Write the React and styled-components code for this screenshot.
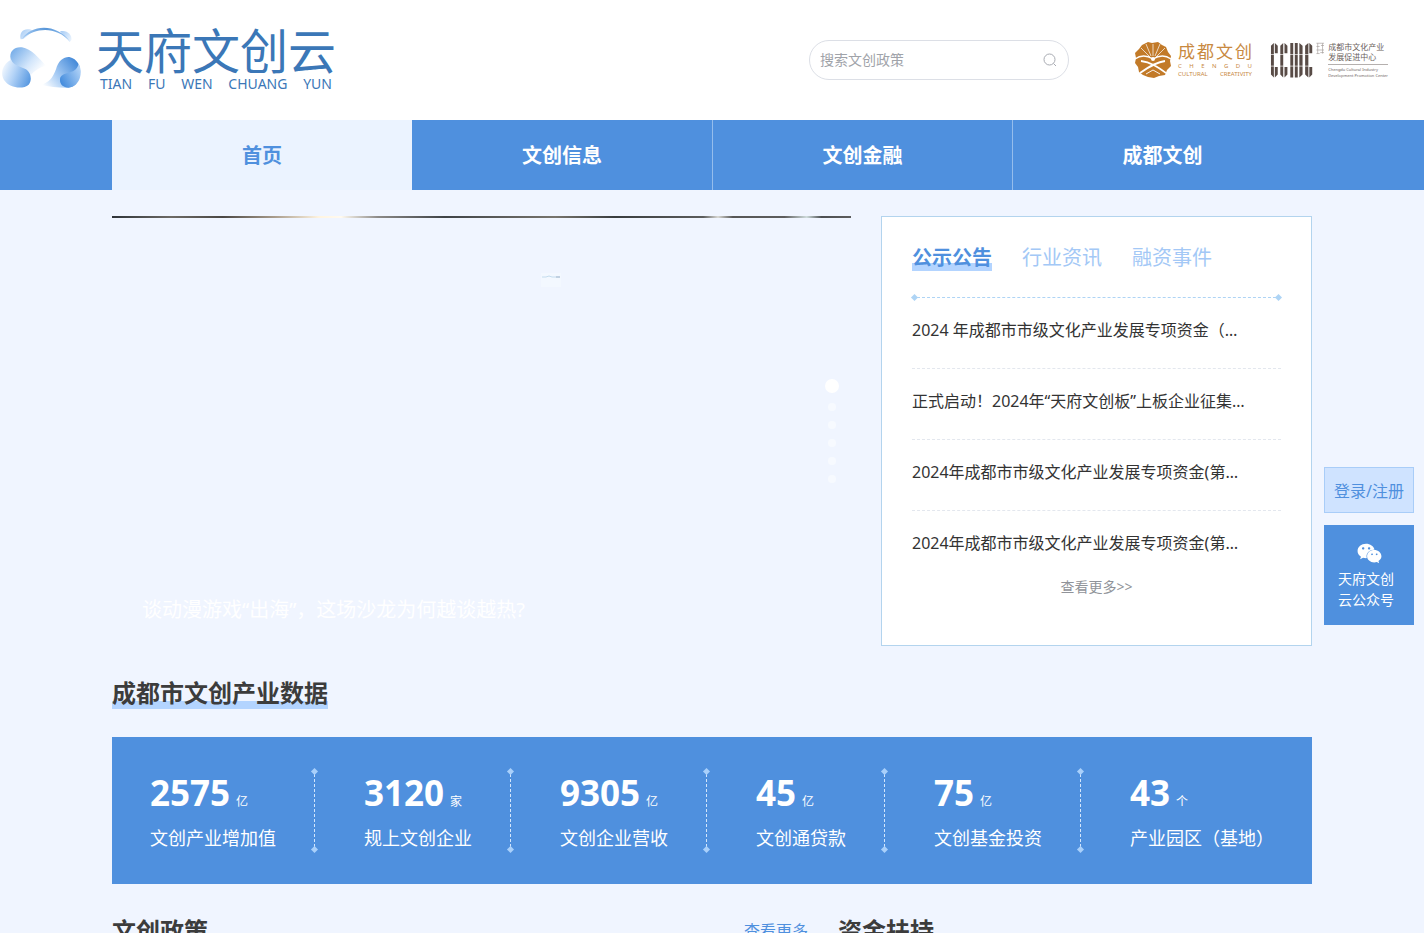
import React, { useState } from "react";
import styled, { createGlobalStyle, css } from "styled-components";
import { FaWeixin } from "react-icons/fa";

const GlobalStyle = createGlobalStyle`
  * {
    box-sizing: border-box;
  }
  body {
    margin: 0;
    background: #f0f5ff;
    color: #333;
    font-family: "Noto Sans", "Noto Sans CJK SC", sans-serif;
    font-size: 16px;
  }
  a {
    color: inherit;
    text-decoration: none;
  }
  button {
    padding: 0;
    border: 0;
    background: none;
    font: inherit;
    cursor: pointer;
  }
  ul {
    margin: 0;
    padding: 0;
    list-style: none;
  }
`;

const Container = styled.div`
  width: 100%;
  max-width: 1200px;
  margin: 0 auto;
`;

/* header */

const Header = styled.header`
  display: flex;
  align-items: center;
  height: 120px;
  padding-right: 36px;
  background: #fff;
`;

const Brand = styled.a`
  display: flex;
  align-items: center;
  gap: 6px;
  margin-right: auto;
`;

const BrandMark = styled.svg`
  width: 90px;
  height: 72px;
`;

const BrandText = styled.div`
  display: flex;
  flex-direction: column;
  width: 240px;
  padding-bottom: 4px;
  color: #3b77b7;
`;

const BrandName = styled.span`
  font-size: 48px;
  line-height: 52px;
`;

const BrandPinyin = styled.span`
  display: flex;
  justify-content: space-between;
  padding: 0 4px;
  font-size: 14px;
  line-height: 14px;
`;

const Search = styled.form`
  display: flex;
  align-items: center;
  width: 260px;
  height: 40px;
  margin-right: 65px;
  padding: 0 10px;
  border: 1px solid #dcdfe6;
  border-radius: 20px;
`;

const SearchInput = styled.input`
  flex: 1;
  min-width: 0;
  padding: 0;
  border: 0;
  outline: 0;
  background: none;
  font: inherit;
  font-size: 14px;
  line-height: 20px;
  &::placeholder {
    color: #a0a3a9;
    opacity: 1;
  }
`;

const SearchButton = styled.button`
  display: flex;
  color: #a8abb2;
`;

const Partners = styled.div`
  display: flex;
  align-items: center;
  gap: 18px;
`;

const Partner = styled.a`
  display: flex;
  align-items: center;
  gap: ${props => props.$gap}px;
  width: 118px;
  color: ${props => props.$color};
`;

const PartnerText = styled.span`
  display: flex;
  flex-direction: column;
  flex: 1;
  white-space: nowrap;
`;

const Spread = styled.span`
  display: flex;
  justify-content: space-between;
  font-size: ${props => props.$size}px;
  line-height: ${props => props.$line}px;
`;

const PartnerLine = styled.span`
  font-size: ${props => props.$size}px;
  line-height: ${props => props.$line}px;
`;

const PartnerRule = styled.span`
  height: 1px;
  margin: 2px 0;
  background: #b5b0ae;
`;

/* navigation */

const Nav = styled.nav`
  background: #4f90de;
`;

const NavList = styled(Container)`
  display: grid;
  grid-template-columns: repeat(4, 1fr);
`;

const NavItem = styled.a`
  padding-top: 1px;
  border-left: 1px solid #95bdec;
  color: #fff;
  font-size: 20px;
  font-weight: 700;
  line-height: 69px;
  text-align: center;
  &:nth-child(-n + 2) {
    border-left: 0;
  }
  ${props =>
    props.$active &&
    css`
      background: #ebf3ff;
      color: #4f90de;
    `}
`;

/* banner and notices */

const Top = styled(Container)`
  display: grid;
  grid-template-columns: minmax(0, 739fr) minmax(0, 431fr);
  gap: 30px;
  padding-top: 26px;
`;

const Banner = styled.section`
  position: relative;
  display: flex;
  align-items: flex-end;
`;

const BannerStrip = styled.div`
  position: absolute;
  top: 0;
  left: 0;
  right: 0;
  height: 2px;
  background: linear-gradient(
    90deg,
    #2e3338 0%,
    #6d6a66 8%,
    #4a4744 15%,
    #a99c8c 22%,
    #fff4e0 28%,
    #fffaf0 31%,
    #8c8a88 36%,
    #3f4347 45%,
    #77746d 60%,
    #393d3f 68%,
    #5b5c5c 80%,
    #d9d9d5 82%,
    #565656 84%,
    #5d5d5d 91%,
    #cfdcdc 94%,
    #4c4f52 96%,
    #5d5d5d 100%
  );
`;

const BannerSpeck = styled.svg`
  position: absolute;
  top: 56px;
  left: 58%;
  width: 20px;
  height: 16px;
`;

const BannerCaption = styled.a`
  padding: 0 30px 22px;
  color: #fff;
  font-size: 20px;
  line-height: 28px;
`;

const Dots = styled.div`
  position: absolute;
  top: 163px;
  right: 12px;
  display: flex;
  flex-direction: column;
  align-items: center;
  gap: 10px;
`;

const Dot = styled.button`
  width: ${props => (props.$active ? 14 : 8)}px;
  height: ${props => (props.$active ? 14 : 8)}px;
  border-radius: 50%;
  background: ${props => (props.$active ? "#fff" : "#f7faff")};
`;

const Notices = styled.section`
  display: flex;
  flex-direction: column;
  height: 430px;
  padding: 28px 30px 0;
  border: 1px solid #b3d4ee;
  background: #fff;
`;

const Tabs = styled.div`
  display: flex;
  gap: 30px;
`;

const Tab = styled.button`
  color: #a3c8f6;
  font-size: 20px;
  line-height: 26px;
  ${props =>
    props.$active &&
    css`
      background: linear-gradient(#b3d4ff, #b3d4ff) bottom / 100% 8px no-repeat;
      color: #4f90de;
      font-weight: 700;
    `}
`;

const Divider = styled.div`
  display: flex;
  align-items: center;
  height: 7px;
  margin-top: 23px;
  color: #aed4f5;
  &::before,
  &::after {
    content: "";
    width: 5px;
    height: 5px;
    background: currentColor;
    transform: rotate(45deg);
  }
`;

const DividerLine = styled.span`
  flex: 1;
  border-top: 1px dashed currentColor;
`;

const NoticeItem = styled.li`
  height: 71px;
  padding-top: 20px;
  border-bottom: 1px dashed #e3e7ee;
  line-height: 24px;
  &:first-child {
    height: 68px;
    padding-top: 17px;
  }
  &:last-child {
    height: 66px;
    border-bottom: 0;
  }
`;

const NoticeLink = styled.a`
  display: block;
  overflow: hidden;
  white-space: nowrap;
`;

const NoticeMore = styled.a`
  align-self: center;
  color: #909399;
  font-size: 14px;
  line-height: 20px;
`;

/* industry figures */

const SectionTitle = styled.h2`
  margin: 0;
  color: #3c3c3c;
  font-size: 24px;
  font-weight: 700;
  line-height: 32px;
`;

const Marked = styled.span`
  display: inline-block;
  background: linear-gradient(#b3d4ff, #b3d4ff) bottom / 100% 8px no-repeat;
`;

const Figures = styled(Container)`
  padding-top: 31px;
`;

const FigurePanel = styled.div`
  display: flex;
  justify-content: space-between;
  margin-top: 28px;
  padding: 30px 38px;
  background: #4f90de;
  color: #fff;
`;

const Figure = styled.div`
  white-space: nowrap;
`;

const FigureValue = styled.div`
  display: flex;
  align-items: baseline;
  gap: 6px;
  height: 50px;
  font-size: 35px;
  font-weight: 700;
  line-height: 52px;
`;

const FigureUnit = styled.span`
  font-size: 12px;
  font-weight: 400;
  line-height: 16px;
`;

const FigureLabel = styled.div`
  padding-top: 8px;
  font-size: 18px;
  line-height: 26px;
`;

const FigureDivider = styled.div`
  display: flex;
  flex-direction: column;
  align-items: center;
  width: 12px;
  height: 87px;
  margin: 0 44px 0 32px;
  padding: 2px 0;
  &::before,
  &::after {
    content: "";
    width: 5px;
    height: 5px;
    background: #a9d0fb;
    transform: rotate(45deg);
  }
`;

const FigureLine = styled.span`
  flex: 1;
  border-left: 1px dashed #d3e6fc;
`;

/* policy and funding */

const Bottom = styled(Container)`
  display: grid;
  grid-template-columns: minmax(0, 696fr) minmax(0, 474fr);
  gap: 30px;
  padding: 31px 0 40px;
`;

const SectionHead = styled.div`
  display: flex;
  align-items: center;
  justify-content: space-between;
`;

const MoreLink = styled.a`
  color: #4f90de;
  font-size: 16px;
  line-height: 24px;
`;

/* floating buttons */

const Side = styled.aside`
  position: fixed;
  top: 467px;
  right: 10px;
  display: flex;
  flex-direction: column;
  gap: 12px;
  width: 90px;
`;

const LoginButton = styled.button`
  height: 46px;
  border: 1px solid #a9cdf8;
  background: #cfe3ff;
  color: #4f90de;
  font-size: 16px;
`;

const WechatButton = styled.button`
  display: flex;
  flex-direction: column;
  align-items: center;
  justify-content: center;
  gap: 2px;
  height: 100px;
  padding: 0 14px;
  background: #4f90de;
  color: #fff;
  font-size: 14px;
  line-height: 21px;
  text-align: left;
`;

const navItems = ["首页", "文创信息", "文创金融", "成都文创"];

const tabs = ["公示公告", "行业资讯", "融资事件"];

const notices = [
  "2024 年成都市市级文化产业发展专项资金（…",
  "正式启动！2024年“天府文创板”上板企业征集…",
  "2024年成都市市级文化产业发展专项资金(第…",
  "2024年成都市市级文化产业发展专项资金(第…"
];

const figures = [
  { value: 2575, unit: "亿", label: "文创产业增加值" },
  { value: 3120, unit: "家", label: "规上文创企业" },
  { value: 9305, unit: "亿", label: "文创企业营收" },
  { value: 45, unit: "亿", label: "文创通贷款" },
  { value: 75, unit: "亿", label: "文创基金投资" },
  { value: 43, unit: "个", label: "产业园区（基地）" }
];

const PandaLogo = () => (
  <BrandMark viewBox="0 6 270 216" aria-hidden="true">
    <defs>
      <linearGradient id="ear" x1="0" y1="0.2" x2="0.9" y2="0.8">
        <stop offset="0" stopColor="#a9cdf5" />
        <stop offset="1" stopColor="#e6f1fd" />
      </linearGradient>
      <linearGradient id="arc" x1="0" y1="0" x2="1" y2="0">
        <stop offset="0" stopColor="#a4cbf4" />
        <stop offset="0.5" stopColor="#5896d8" />
        <stop offset="1" stopColor="#9ac5f2" />
      </linearGradient>
      <linearGradient id="tail" x1="0" y1="0.2" x2="0.9" y2="0.8">
        <stop offset="0" stopColor="#79afe9" />
        <stop offset="0.6" stopColor="#d3e6fb" />
        <stop offset="1" stopColor="#fff" />
      </linearGradient>
      <linearGradient id="left" x1="0" y1="0.4" x2="1" y2="0.8">
        <stop offset="0" stopColor="#eff6fe" />
        <stop offset="0.4" stopColor="#b3d3f7" />
        <stop offset="1" stopColor="#5496e0" />
      </linearGradient>
      <linearGradient id="wing" x1="0" y1="0.8" x2="1" y2="0.2">
        <stop offset="0" stopColor="#fff" />
        <stop offset="0.4" stopColor="#a9cdf5" />
        <stop offset="1" stopColor="#3c84d6" />
      </linearGradient>
      <linearGradient id="curl" x1="1" y1="0.2" x2="0" y2="0.8">
        <stop offset="0" stopColor="#b3d4f8" />
        <stop offset="1" stopColor="#3f89dc" />
      </linearGradient>
    </defs>
    <path d="M62 52C57 32 70 19 88 22C93 22 97 25 99 28L70 51Z" fill="url(#ear)" />
    <path d="M180 28C200 22 217 38 214 54L209 60Z" fill="url(#ear)" />
    <path d="M66 51C92 8 170 2 211 60C170 14 110 14 66 51Z" fill="url(#arc)" />
    <path d="M32 112C26 86 46 73 66 76C94 80 118 110 138 132C118 136 104 146 92 160C70 148 38 136 32 112Z" fill="url(#tail)" />
    <path d="M32 114C12 124 -2 150 12 174C30 200 70 202 86 188C98 172 92 152 78 142C60 132 36 130 32 108Z" fill="url(#left)" />
    <path d="M120 190C148 182 158 168 168 142C174 116 192 104 208 105C232 110 244 134 240 156C236 184 220 196 205 197C180 198 150 194 120 190Z" fill="url(#wing)" />
    <path d="M180 172C182 146 226 162 236 126C250 150 240 194 206 197C190 197 179 188 180 172Z" fill="url(#curl)" />
  </BrandMark>
);

const SunbirdLogo = () => (
  <svg width="38" height="38" viewBox="0 0 38 38" aria-hidden="true">
    <path
      d="M14 1L18 2L24 1L28 4L32 6L34 11L37 15L36 20L37 25L33 29L31 34L25 35L20 37L14 36L9 34L5 31L4 26L1 22L2 17L1 12L5 8L8 4Z"
      fill="#c27a28"
    />
    <g fill="none" stroke="#fff">
      <path
        d="M19 15V3M17 15L12 3M21 15L26 3M16 16L7 7M22 16L31 7"
        strokeWidth="0.7"
      />
      <path d="M1 18C8 13 14 15 19 18C24 15 30 13 37 18" strokeWidth="1.4" />
      <path d="M7 20C17 21 25 27 32 32M31 20C22 21 13 27 6 32" strokeWidth="1.8" />
      <path d="M12 33L19 29L26 33" strokeWidth="0.9" />
    </g>
    <circle cx="19" cy="18" r="2" fill="#fff" />
  </svg>
);

const CenterLogo = () => (
  <svg width="56" height="38" viewBox="12 14 168 114" aria-hidden="true">
    <g fill="#584b46">
      <path d="M24 18V125L15 116V27ZM27 18L36 27V50H27ZM27 93H36V116L27 125Z" />
      <path d="M53 18V125L44 116V27ZM57 18L66 27V50H57ZM57 93H66V116L57 125Z" />
      <path d="M75 18H84V125H75ZM89 18H98V125H89ZM103 18L113 27V116L103 125Z" />
      <path d="M131 18V125L121 116V27ZM134 18L143 27V50H134ZM134 93H143V116L134 125Z" />
    </g>
    <path d="M12 54H145M12 90H145" stroke="#fff" strokeWidth="2" />
    <path
      d="M156 19H180M156 29H166M170 26H180M160 19V51M175 19V51M156 40H180M156 51H166M168 48H180"
      fill="none"
      stroke="#a39c98"
      strokeWidth="2"
    />
  </svg>
);

const SearchIcon = () => (
  <svg width="16" height="16" viewBox="0 0 16 16" fill="none" stroke="currentColor">
    <circle cx="7.5" cy="7.5" r="5.5" />
    <path d="M11.5 11.5L14 14" />
  </svg>
);

export default function App() {
  const [tab, setTab] = useState(0);
  const [slide, setSlide] = useState(0);

  return (
    <>
      <GlobalStyle />
      <Header>
        <Brand href="#">
          <PandaLogo />
          <BrandText>
            <BrandName>天府文创云</BrandName>
            <BrandPinyin>
              {["TIAN", "FU", "WEN", "CHUANG", "YUN"].map(word => (
                <span key={word}>{word}</span>
              ))}
            </BrandPinyin>
          </BrandText>
        </Brand>
        <Search onSubmit={e => e.preventDefault()}>
          <SearchInput placeholder="搜索文创政策" aria-label="搜索文创政策" />
          <SearchButton aria-label="搜索">
            <SearchIcon />
          </SearchButton>
        </Search>
        <Partners>
          <Partner href="#" $gap={6} $color="#c8893f">
            <SunbirdLogo />
            <PartnerText>
              <Spread $size={17} $line={20}>
                {[..."成都文创"].map(c => (
                  <span key={c}>{c}</span>
                ))}
              </Spread>
              <Spread $size={6} $line={8}>
                {[..."CHENGDU"].map(c => (
                  <span key={c}>{c}</span>
                ))}
              </Spread>
              <Spread $size={6} $line={8}>
                <span>CULTURAL</span>
                <span>CREATIVITY</span>
              </Spread>
            </PartnerText>
          </Partner>
          <Partner href="#" $gap={4} $color="#6b615d">
            <CenterLogo />
            <PartnerText>
              <PartnerLine $size={8} $line={10}>成都市文化产业</PartnerLine>
              <PartnerLine $size={8} $line={10}>发展促进中心</PartnerLine>
              <PartnerRule />
              <PartnerLine $size={4} $line={6}>Chengdu Cultural Industry</PartnerLine>
              <PartnerLine $size={4} $line={6}>Development Promotion Center</PartnerLine>
            </PartnerText>
          </Partner>
        </Partners>
      </Header>

      <Nav>
        <NavList>
          {navItems.map((item, i) => (
            <NavItem key={item} href="#" $active={i === 0}>
              {item}
            </NavItem>
          ))}
        </NavList>
      </Nav>

      <Top>
        <Banner>
          <BannerStrip />
          <BannerSpeck viewBox="0 0 20 16" aria-hidden="true">
            <rect y="1" width="20" height="14" fill="#f3f8ff" />
            <path d="M1 5H5L8 4L11 5H15" stroke="#c4dcee" fill="none" />
            <path d="M15 5H19" stroke="#8fa9c4" />
          </BannerSpeck>
          <BannerCaption href="#">谈动漫游戏“出海”，这场沙龙为何越谈越热?</BannerCaption>
          <Dots>
            {[0, 1, 2, 3, 4, 5].map(i => (
              <Dot
                key={i}
                $active={i === slide}
                aria-label={`第${i + 1}张`}
                onClick={() => setSlide(i)}
              />
            ))}
          </Dots>
        </Banner>
        <Notices>
          <Tabs>
            {tabs.map((name, i) => (
              <Tab key={name} $active={i === tab} onClick={() => setTab(i)}>
                {name}
              </Tab>
            ))}
          </Tabs>
          <Divider>
            <DividerLine />
          </Divider>
          <ul>
            {notices.map((text, i) => (
              <NoticeItem key={i}>
                <NoticeLink href="#">{text}</NoticeLink>
              </NoticeItem>
            ))}
          </ul>
          <NoticeMore href="#">查看更多&gt;&gt;</NoticeMore>
        </Notices>
      </Top>

      <Figures>
        <SectionTitle>
          <Marked>成都市文创产业数据</Marked>
        </SectionTitle>
        <FigurePanel>
          {figures.map((item, i) => (
            <React.Fragment key={item.label}>
              {i > 0 && (
                <FigureDivider>
                  <FigureLine />
                </FigureDivider>
              )}
              <Figure>
                <FigureValue>
                  {item.value}
                  <FigureUnit>{item.unit}</FigureUnit>
                </FigureValue>
                <FigureLabel>{item.label}</FigureLabel>
              </Figure>
            </React.Fragment>
          ))}
        </FigurePanel>
      </Figures>

      <Bottom>
        <SectionHead>
          <SectionTitle>文创政策</SectionTitle>
          <MoreLink href="#">查看更多</MoreLink>
        </SectionHead>
        <SectionHead>
          <SectionTitle>资金扶持</SectionTitle>
        </SectionHead>
      </Bottom>

      <Side>
        <LoginButton>登录/注册</LoginButton>
        <WechatButton>
          <FaWeixin size={25} />
          <span>天府文创云公众号</span>
        </WechatButton>
      </Side>
    </>
  );
}
